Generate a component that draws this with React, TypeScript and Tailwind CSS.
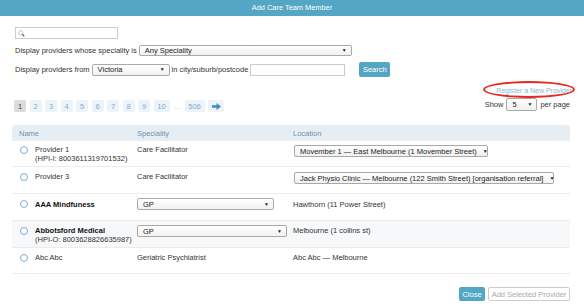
import React from "react"

function Select({ label, w, h = 12 }: { label: string; w: string; h?: number }) {
  return (
    <div
      className={`${w} flex items-center justify-between border border-[#a9a9a9] rounded-[2px] bg-gradient-to-b from-white to-[#f1f1f1] pl-[5px] pr-[4px] text-[#222]`}
      style={{ height: h }}
    >
      <span className="whitespace-nowrap">{label}</span>
      <span className="text-[5px] leading-none ml-[6px]">▼</span>
    </div>
  )
}

function Radio() {
  return <span className="block w-[8px] h-[8px] rounded-full border border-[#7aaed0] bg-white shrink-0" />
}

const pages = ["2", "3", "4", "5", "6", "7", "8", "9", "10"]

export default function App() {
  return (
    <div className="relative w-[584px] h-[306px] overflow-hidden bg-white font-['Liberation_Sans',Arial,sans-serif] text-[7.5px] text-[#333]">
      <div className="h-[16px] bg-[#53a6c4] flex items-center justify-center text-white text-[7.4px]">
        Add Care Team Member
      </div>

      <div className="px-[15px]">
        <div className="mt-[11px] w-[103px] h-[12px] border border-[#ccc] flex items-center pl-[2px]">
          <svg width="7" height="7" viewBox="0 0 10 10">
            <circle cx="4" cy="4" r="3" fill="none" stroke="#bbb" strokeWidth="1.2" />
            <path d="M6 6 L9 9" stroke="#555" strokeWidth="1.6" />
          </svg>
        </div>

        <div className="mt-[6px] flex items-center gap-[2px]">
          <span>Display providers whose speciality is</span>
          <Select label="Any Speciality" w="w-[213px]" h={11} />
        </div>

        <div className="mt-[6px] flex items-center h-[15px]">
          <span>Display providers from</span>
          <div className="ml-[2px]">
            <Select label="Victoria" w="w-[78px]" />
          </div>
          <span className="ml-[2px]">in city/suburb/postcode</span>
          <div className="ml-[2px] w-[95px] h-[12px] border border-[#ccc]" />
          <button className="ml-[14px] h-[15px] w-[31px] rounded-[2px] bg-[#53a6c4] text-white text-[7.5px]">
            Search
          </button>
        </div>
      </div>

      <div className="mt-[8px] pl-[14px] pr-[12px] flex justify-between items-end">
        <div className="flex items-center gap-[3.5px] mb-[-1px]">
          <span className="w-[12px] h-[12px] rounded-[2px] bg-[#dcdcdc] text-[#444] flex items-center justify-center">1</span>
          {pages.map((p) => (
            <span
              key={p}
              className={`${p === "10" ? "w-[16px]" : "w-[12px]"} h-[12px] rounded-[2px] bg-[#edf3f9] text-[#7ab0d0] flex items-center justify-center`}
            >
              {p}
            </span>
          ))}
          <span className="w-[8px] text-[#b5cde0] text-center">...</span>
          <span className="w-[20px] h-[12px] rounded-[2px] bg-[#edf3f9] text-[#7ab0d0] flex items-center justify-center">506</span>
          <span className="w-[16px] h-[12px] rounded-[2px] bg-[#edf3f9] flex items-center justify-center">
            <svg width="9" height="7" viewBox="0 0 9 7">
              <path d="M0 2.3 H4.5 V0 L9 3.5 L4.5 7 V4.7 H0 Z" fill="#3d8fc0" />
            </svg>
          </span>
        </div>

        <div className="flex flex-col items-end">
          <div className="h-[12px] flex items-center text-[7px] text-[#88b7d6]">Register a New Provider</div>
          <div className="mt-[1px] mr-[2px] flex items-center gap-[3px]">
            <span>Show</span>
            <Select label="5" w="w-[31px]" h={13} />
            <span>per page</span>
          </div>
        </div>
      </div>

      <div className="absolute left-[483px] top-[81px] w-[92px] h-[17px] rounded-[50%] border-2 border-[#e8281f]" />

      <div className="mt-[14px] ml-[12px] w-[558px]">
        <div className="h-[16px] grid grid-cols-[120px_156px_1fr] items-center bg-[#e6eef4] rounded-t-[3px] text-[#6f93ad]">
          <span className="pl-[7px]">Name</span>
          <span className="pl-[5px]">Speciality</span>
          <span className="pl-[5px]">Location</span>
        </div>

        <div className="h-[26px] grid grid-cols-[120px_156px_1fr] items-start pt-[4px] border-b border-[#ececec]">
          <div className="flex gap-[7px] pl-[8px] pt-[1px]">
            <Radio />
            <div className="leading-[9px] -mt-[1px]">
              <div>Provider 1</div>
              <div>(HPI-I: 8003611319701532)</div>
            </div>
          </div>
          <span className="pl-[5px] leading-[9px]">Care Facilitator</span>
          <div className="pl-[6px]">
            <Select label="Movember 1 — East Melbourne (1 Movember Street)" w="w-[194px]" />
          </div>
        </div>

        <div className="h-[27px] grid grid-cols-[120px_156px_1fr] items-start pt-[5px] border-b border-[#ececec]">
          <div className="flex gap-[7px] pl-[8px] pt-[1px]">
            <Radio />
            <span className="leading-[9px] -mt-[1px]">Provider 3</span>
          </div>
          <span className="pl-[5px] leading-[9px]">Care Facilitator</span>
          <div className="pl-[6px]">
            <Select label="Jack Physio Clinic — Melbourne (122 Smith Street) [organisation referral]" w="w-[260px]" />
          </div>
        </div>

        <div className="h-[27px] grid grid-cols-[120px_156px_1fr] items-start pt-[4px] border-b border-[#ececec]">
          <div className="flex gap-[7px] pl-[8px] pt-[2px]">
            <Radio />
            <span className="leading-[9px] font-bold text-[#111]">AAA Mindfuness</span>
          </div>
          <div className="pl-[5px]">
            <Select label="GP" w="w-[137px]" />
          </div>
          <span className="pl-[5px] pt-[2px] leading-[9px]">Hawthorn (11 Power Street)</span>
        </div>

        <div className="h-[27px] grid grid-cols-[120px_156px_1fr] items-start pt-[4px] bg-[#f6f8fa] border-b border-[#ececec]">
          <div className="flex gap-[7px] pl-[8px] pt-[2px]">
            <Radio />
            <div className="leading-[9px] -mt-[1px]">
              <div className="font-bold text-[#111]">Abbotsford Medical</div>
              <div>(HPI-O: 8003628826635987)</div>
            </div>
          </div>
          <div className="pl-[5px]">
            <Select label="GP" w="w-[150px]" />
          </div>
          <span className="pl-[5px] pt-[1px] leading-[9px]">Melbourne (1 collins st)</span>
        </div>

        <div className="h-[26px] grid grid-cols-[120px_156px_1fr] items-start pt-[5px] border-b border-[#ececec]">
          <div className="flex gap-[7px] pl-[8px] pt-[1px]">
            <Radio />
            <span className="leading-[9px] -mt-[1px]">Abc Abc</span>
          </div>
          <span className="pl-[5px] leading-[9px]">Geriatric Psychiatrist</span>
          <span className="pl-[5px] leading-[9px]">Abc Abc — Melbourne</span>
        </div>
      </div>

      <div className="mt-[13px] mr-[14px] flex justify-end gap-[3px]">
        <button className="h-[14px] w-[26px] rounded-[2px] bg-[#53a6c4] text-white text-[7.5px]">Close</button>
        <button className="h-[14px] w-[82px] rounded-[2px] border border-[#ccc] bg-white text-[#aaa] text-[7.5px]">
          Add Selected Provider
        </button>
      </div>
    </div>
  )
}
